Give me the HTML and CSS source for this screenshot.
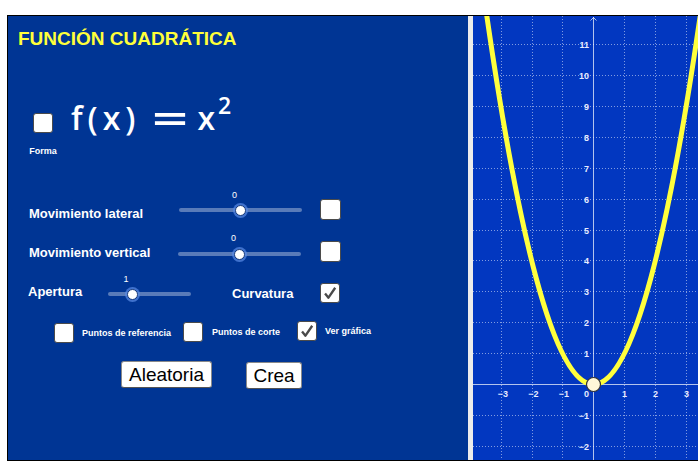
FILE: index.html
```html
<!DOCTYPE html>
<html lang="es">
  <head>
    <meta charset="UTF-8" />
    <title>Función cuadrática</title>
    <link rel="stylesheet" href="styles.css">
  </head>
  <body>
    <div class="applet">
      <div class="panel">
        <div class="title">FUNCIÓN CUADRÁTICA</div>

        <div class="formula-row">
          <div class="forma">
            <span class="check"></span>
            <span class="tiny">Forma</span>
          </div>
          <div class="formula">
            <span class="fx">f(x)</span><span class="eq">=</span><span class="xx">x</span><sup>2</sup>
          </div>
        </div>

        <div class="row row-lateral">
          <span class="label">Movimiento lateral</span>
          <div class="slider">
            <span class="val" style="left: 50%">0</span>
            <div class="track"><span class="thumb" style="left: 50%"></span></div>
          </div>
          <span class="check big"></span>
        </div>

        <div class="row row-vertical">
          <span class="label">Movimiento vertical</span>
          <div class="slider">
            <span class="val" style="left: 50%">0</span>
            <div class="track"><span class="thumb" style="left: 50%"></span></div>
          </div>
          <span class="check big"></span>
        </div>

        <div class="row row-apertura">
          <span class="label">Apertura</span>
          <div class="slider short">
            <span class="val" style="left: 29%">1</span>
            <div class="track"><span class="thumb" style="left: 29%"></span></div>
          </div>
          <span class="label curv">Curvatura</span>
          <span class="check checked">
            <svg viewBox="0 0 20 20"><path d="M4.5 10.5 L8.3 15.2 L15.8 4.2" /></svg>
          </span>
        </div>

        <div class="row row-points">
          <span class="check c1"></span>
          <span class="tiny t1">Puntos de referencia</span>
          <span class="check c2"></span>
          <span class="tiny t2">Puntos de corte</span>
          <span class="check checked c3">
            <svg viewBox="0 0 20 20"><path d="M4.5 10.5 L8.3 15.2 L15.8 4.2" /></svg>
          </span>
          <span class="tiny t3">Ver gráfica</span>
        </div>

        <div class="row row-buttons">
          <button class="btn btn-random">Aleatoria</button>
          <button class="btn btn-create">Crea</button>
        </div>
      </div>

      <div class="divider"></div>

      <div class="graph">
        <svg width="225" height="444" viewBox="0 0 225 444">
          <g class="grid">
            <line x1="28.5" y1="0" x2="28.5" y2="444" />
            <line x1="59.5" y1="0" x2="59.5" y2="444" />
            <line x1="89.5" y1="0" x2="89.5" y2="444" />
            <line x1="151.5" y1="0" x2="151.5" y2="444" />
            <line x1="182.5" y1="0" x2="182.5" y2="444" />
            <line x1="213.5" y1="0" x2="213.5" y2="444" />
            <line x1="0" y1="28.5" x2="225" y2="28.5" />
            <line x1="0" y1="59.5" x2="225" y2="59.5" />
            <line x1="0" y1="90.5" x2="225" y2="90.5" />
            <line x1="0" y1="121.5" x2="225" y2="121.5" />
            <line x1="0" y1="152.5" x2="225" y2="152.5" />
            <line x1="0" y1="183.5" x2="225" y2="183.5" />
            <line x1="0" y1="214.5" x2="225" y2="214.5" />
            <line x1="0" y1="244.5" x2="225" y2="244.5" />
            <line x1="0" y1="275.5" x2="225" y2="275.5" />
            <line x1="0" y1="306.5" x2="225" y2="306.5" />
            <line x1="0" y1="337.5" x2="225" y2="337.5" />
            <line x1="0" y1="399.5" x2="225" y2="399.5" />
            <line x1="0" y1="430.5" x2="225" y2="430.5" />
          </g>
          <g class="axis">
            <line x1="0" y1="368.5" x2="225" y2="368.5" />
            <line x1="120.5" y1="1" x2="120.5" y2="444" />
            <path d="M117.5 4.5 L120.5 1.5 L123.5 4.5" />
          </g>
          <g class="ticks">
            <text x="30" y="380.5" text-anchor="middle">−3</text>
            <text x="60.5" y="380.5" text-anchor="middle">−2</text>
            <text x="91" y="380.5" text-anchor="middle">−1</text>
            <text x="116" y="380.5" text-anchor="end">0</text>
            <text x="151.5" y="380.5" text-anchor="middle">1</text>
            <text x="182.5" y="380.5" text-anchor="middle">2</text>
            <text x="213.5" y="380.5" text-anchor="middle">3</text>
            <text x="116" y="31.7" text-anchor="end">11</text>
            <text x="116" y="62.7" text-anchor="end">10</text>
            <text x="116" y="93.7" text-anchor="end">9</text>
            <text x="116" y="124.7" text-anchor="end">8</text>
            <text x="116" y="155.7" text-anchor="end">7</text>
            <text x="116" y="186.7" text-anchor="end">6</text>
            <text x="116" y="217.7" text-anchor="end">5</text>
            <text x="116" y="247.7" text-anchor="end">4</text>
            <text x="116" y="278.7" text-anchor="end">3</text>
            <text x="116" y="309.7" text-anchor="end">2</text>
            <text x="116" y="340.7" text-anchor="end">1</text>
            <text x="116" y="402.7" text-anchor="end">−1</text>
            <text x="116" y="433.7" text-anchor="end">−2</text>
          </g>
          <path class="curve" d="M6.2 -54.5 Q120.5 791.5 234.8 -54.5" />
          <circle class="vertex" cx="120.5" cy="368.5" r="7" />
        </svg>
      </div>
    </div>
  </body>
</html>
```

FILE: styles.css
```css
* {
  margin: 0;
  padding: 0;
  box-sizing: border-box;
}

html,
body {
  overflow: hidden;
}

body {
  font-family: "Liberation Sans", Arial, sans-serif;
  background-color: #ffffff;
  color: #ffffff;
}

.applet {
  display: flex;
  width: 691px;
  height: 446px;
  margin: 15px 0 0 7px;
  border: 1px solid #000;
  border-right: none;
}

.panel {
  width: 460px;
  background-color: #003594;
  padding-top: 12px;
}

.divider {
  width: 5px;
  background-color: #ececec;
}

.graph {
  flex: 1;
  background-color: #0237c0;
}

.graph svg {
  display: block;
}

/* title + formula */
.title {
  margin-left: 10px;
  font-size: 19px;
  line-height: 22px;
  font-weight: bold;
  color: #ffff3a;
}

.formula-row {
  display: flex;
  align-items: flex-start;
  height: 53px;
  margin-top: 54px;
}

.forma {
  display: flex;
  flex-direction: column;
  align-items: center;
  width: 30px;
  margin-left: 20px;
}

.forma .check {
  margin-top: 9px;
}

.forma .tiny {
  margin-top: 13px;
}

.formula {
  margin-left: 13px;
  margin-top: -1px;
  font-family: "Open Sans", "DejaVu Sans", sans-serif;
  font-size: 32px;
  font-weight: 600;
  line-height: 30px;
  white-space: nowrap;
}

.fx {
  letter-spacing: 5px;
}

.eq {
  display: inline-block;
  width: 34px;
  margin-left: 13px;
  text-align: center;
  transform: scale(2, 1.35);
}

.xx {
  margin-left: 10px;
}

.formula sup {
  font-size: 23px;
  line-height: 0;
  vertical-align: 16px;
  margin-left: 3px;
}

/* controls */
.row {
  display: flex;
  align-items: flex-start;
}

.label {
  font-size: 13px;
  line-height: 15px;
  font-weight: bold;
  white-space: nowrap;
}

.tiny {
  font-size: 9px;
  line-height: 11px;
  font-weight: bold;
  white-space: nowrap;
}

.check {
  display: block;
  flex: none;
  width: 20px;
  height: 20px;
  background: #fff;
  border: 1px solid #4b4b4b;
  border-radius: 3px;
}

.check.big {
  width: 21px;
  height: 21px;
}

.check svg {
  display: block;
  width: 100%;
  height: 100%;
}

.check path {
  fill: none;
  stroke: #4a4a4a;
  stroke-width: 2.6;
  stroke-linejoin: round;
}

.slider {
  position: relative;
  width: 123px;
  height: 31px;
}

.slider.short {
  width: 83px;
}

.val {
  position: absolute;
  top: 0;
  margin-left: -6px;
  transform: translateX(-50%);
  font-size: 9px;
  line-height: 10px;
}

.track {
  position: relative;
  height: 4px;
  margin-top: 18px;
  border-radius: 2px;
  background: rgba(255, 255, 255, 0.35);
}

.thumb {
  position: absolute;
  top: 50%;
  width: 11px;
  height: 11px;
  margin: -5.5px 0 0 -5.5px;
  border-radius: 50%;
  background: #fff;
  border: 1.5px solid #17397a;
  box-shadow: 0 0 0 2px rgba(90, 140, 230, 0.7);
}

.row-lateral {
  height: 43px;
  margin-top: 33px;
}

.row-lateral .label {
  width: 150px;
  margin: 16px 0 0 21px;
}

.row-lateral .check {
  margin: 9px 0 0 18px;
}

.row-vertical {
  height: 41px;
}

.row-vertical .label {
  width: 149px;
  margin: 12px 0 0 21px;
}

.row-vertical .track {
  margin-top: 19px;
}

.row-vertical .check {
  margin: 8px 0 0 19px;
}

.row-apertura {
  height: 47px;
}

.row-apertura .label {
  width: 80px;
  margin: 10px 0 0 20px;
}

.row-apertura .label.curv {
  width: 88px;
  margin: 12px 0 0 41px;
}

.row-apertura .check {
  margin-top: 9px;
}

.row-points {
  height: 40px;
}

.row-points .c1 {
  margin: 2px 0 0 46px;
}

.row-points .t1 {
  margin: 7px 0 0 8px;
}

.row-points .c2 {
  margin: 1px 0 0 12px;
}

.row-points .t2 {
  margin: 6px 0 0 9px;
}

.row-points .c3 {
  margin: 0 0 0 17px;
}

.row-points .t3 {
  margin: 5px 0 0 8px;
}

.btn {
  height: 27px;
  font-family: "Liberation Sans", Arial, sans-serif;
  font-size: 19px;
  line-height: 22px;
  color: #000;
  background: #fff;
  border: 1px solid #8a8a8a;
  border-bottom-color: #555;
  border-radius: 3px;
  text-align: center;
}

.btn-random {
  width: 91px;
  margin-left: 113px;
}

.btn-create {
  width: 56px;
  margin: 1px 0 0 34px;
}

/* graph */
.grid line {
  stroke: rgba(255, 255, 255, 0.5);
  stroke-width: 1;
  stroke-dasharray: 1 2;
}

.axis line,
.axis path {
  stroke: rgba(255, 255, 255, 0.7);
  stroke-width: 1;
  fill: none;
}

.ticks text {
  font-family: "Liberation Sans", Arial, sans-serif;
  font-size: 9px;
  font-weight: bold;
  fill: #e6ebff;
}

.curve {
  fill: none;
  stroke: #ffff3c;
  stroke-width: 5;
}

.vertex {
  fill: #fff8d8;
  stroke: #333;
  stroke-width: 1.2;
}
```
